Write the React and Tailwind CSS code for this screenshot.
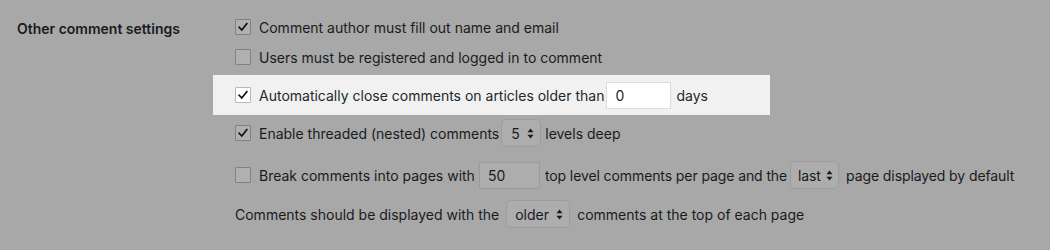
import React from "react";

function Check({ checked, light }) {
  return (
    <span
      className={
        "mr-[8px] inline-flex h-4 w-4 shrink-0 items-center justify-center rounded-[1px] border " +
        (light ? "border-[#b4b9be] bg-white" : "border-[#7e8185] bg-[#b0b0b0]")
      }
    >
      {checked && (
        <svg width="12" height="12" viewBox="0 0 12 12">
          <path d="M2.2 6.3 L4.8 9 L9.8 2.6" fill="none" stroke="#111" strokeWidth="1.7" strokeLinecap="square" />
        </svg>
      )}
    </span>
  );
}

function Arrows() {
  return (
    <svg width="7" height="11" viewBox="0 0 7 11" className="ml-auto shrink-0">
      <path d="M3.5 0.5 L6.5 4.3 L0.5 4.3 Z" fill="#1a1a1a" />
      <path d="M3.5 10.5 L6.5 6.7 L0.5 6.7 Z" fill="#1a1a1a" />
    </svg>
  );
}

function Select({ value, cls }) {
  return (
    <span
      className={
        "inline-flex h-[28px] shrink-0 items-center rounded-[5px] border border-[#9c9c9c] bg-[#adadad] text-[14px] text-[#181b1e] " +
        cls
      }
    >
      {value}
      <Arrows />
    </span>
  );
}

export default function App() {
  return (
    <div
      className="h-[250px] w-[1050px] bg-[#a8a8a8] text-[14px] text-[#181b1e]"
      style={{ fontFamily: "Inter, 'Liberation Sans', sans-serif" }}
    >
      <div className="flex">
        <div className="w-[235px] shrink-0 pl-[17px] pt-[18px] font-semibold">Other comment settings</div>
        <div className="flex flex-col pt-[15px]">
          <div className="flex h-[24px] items-center">
            <Check checked />
            <span>Comment author must fill out name and email</span>
          </div>
          <div className="mt-[6px] flex h-[24px] items-center">
            <Check />
            <span>Users must be registered and logged in to comment</span>
          </div>
          <div className="-ml-[22px] mt-[6px] flex h-[40px] w-[557px] items-center bg-[#f1f1f1] pl-[22px] text-[#23282d]">
            <Check checked light />
            <span>Automatically close comments on articles older than</span>
            <span className="ml-[2px] flex h-[27px] w-[65px] items-center border border-[#dddddd] bg-white pl-[8px]">0</span>
            <span className="ml-[5px]">days</span>
          </div>
          <div className="mt-[3px] flex h-[30px] items-center">
            <Check checked />
            <span>Enable threaded (nested) comments</span>
            <Select value="5" cls="ml-[2px] w-[40px] pl-[9px] pr-[6px]" />
            <span className="ml-[4px]">levels deep</span>
          </div>
          <div className="mt-[12px] flex h-[30px] items-center">
            <Check />
            <span>Break comments into pages with</span>
            <span className="ml-[4px] flex h-[27px] w-[61px] items-center border border-[#9b9b9b] bg-[#adadad] pl-[8px]">50</span>
            <span className="ml-[5px] tracking-[-0.1px]">top level comments per page and the</span>
            <Select value="last" cls="ml-[3px] w-[49px] pl-[7px] pr-[5px] tracking-[-0.2px]" />
            <span className="ml-[7px] tracking-[-0.1px]">page displayed by default</span>
          </div>
          <div className="mt-[9px] flex h-[30px] items-center">
            <span>Comments should be displayed with the</span>
            <Select value="older" cls="ml-[7px] w-[64px] pl-[8px] pr-[6px]" />
            <span className="ml-[7px]">comments at the top of each page</span>
          </div>
        </div>
      </div>
    </div>
  );
}
